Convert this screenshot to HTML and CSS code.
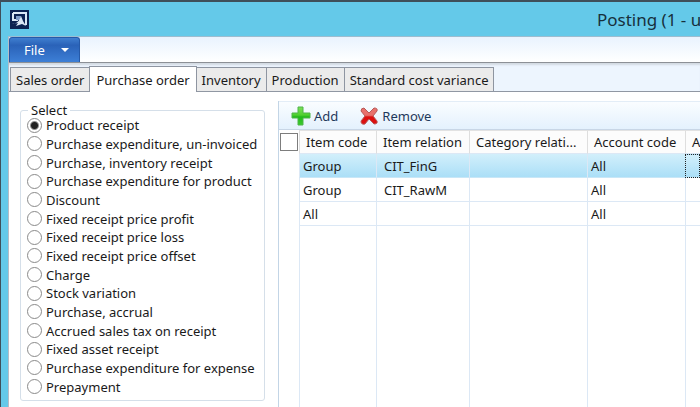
FILE: index.html
```html
<!DOCTYPE html>
<html lang="en">
<head>
  <meta charset="UTF-8">
  <title>Posting</title>
  <link rel="stylesheet" href="styles.css">
</head>
<body>
  <header class="titlebar">
    <svg class="app-icon" viewBox="0 0 19 19">
      <rect width="19" height="19" fill="#0c2252"/>
      <path d="M3 3h13v12M3 3v7h5" fill="none" stroke="#dce8f6" stroke-width="2"/>
      <path d="M6 6h5l-1 4H6z" fill="#7f9cc8"/>
      <path d="M2 14c4 0 7-2 9-8l2 5 3 5-4-2-6 2 2-3z" fill="#dce8f6"/>
    </svg>
    <h1 class="title">Posting (1 - u</h1>
  </header>

  <div class="window">
    <div class="menubar">
      <button class="file-button" type="button">File <span class="arrow"></span></button>
    </div>

    <nav class="tabs" role="tablist">
      <button class="tab" type="button" role="tab">Sales order</button>
      <button class="tab active" type="button" role="tab" aria-selected="true">Purchase order</button>
      <button class="tab" type="button" role="tab">Inventory</button>
      <button class="tab" type="button" role="tab">Production</button>
      <button class="tab" type="button" role="tab">Standard cost variance</button>
    </nav>

    <main class="content">
      <fieldset class="select-group">
        <legend>Select</legend>
        <div class="options">
          <label><input type="radio" name="posting" checked>Product receipt</label>
          <label><input type="radio" name="posting">Purchase expenditure, un-invoiced</label>
          <label><input type="radio" name="posting">Purchase, inventory receipt</label>
          <label><input type="radio" name="posting">Purchase expenditure for product</label>
          <label><input type="radio" name="posting">Discount</label>
          <label><input type="radio" name="posting">Fixed receipt price profit</label>
          <label><input type="radio" name="posting">Fixed receipt price loss</label>
          <label><input type="radio" name="posting">Fixed receipt price offset</label>
          <label><input type="radio" name="posting">Charge</label>
          <label><input type="radio" name="posting">Stock variation</label>
          <label><input type="radio" name="posting">Purchase, accrual</label>
          <label><input type="radio" name="posting">Accrued sales tax on receipt</label>
          <label><input type="radio" name="posting">Fixed asset receipt</label>
          <label><input type="radio" name="posting">Purchase expenditure for expense</label>
          <label><input type="radio" name="posting">Prepayment</label>
        </div>
      </fieldset>

      <section class="grid-panel">
        <div class="toolbar">
          <button class="tool" type="button">
            <svg class="tool-icon" viewBox="0 0 20 20">
              <defs>
                <linearGradient id="green" x2="0" y2="1">
                  <stop offset="0" stop-color="#7fe05a"/>
                  <stop offset="0.45" stop-color="#4fd02f"/>
                  <stop offset="0.55" stop-color="#22b91c"/>
                  <stop offset="1" stop-color="#3ccb2c"/>
                </linearGradient>
              </defs>
              <path d="M7 1h5v6h7v5h-7v7H7v-7H1V7h6z" fill="url(#green)" stroke="#4fb548"/>
            </svg>
            Add
          </button>
          <button class="tool" type="button">
            <svg class="tool-icon" viewBox="0 0 20 20">
              <defs>
                <linearGradient id="red" x2="0" y2="1">
                  <stop offset="0.45" stop-color="#e8716c"/>
                  <stop offset="0.55" stop-color="#dc1010"/>
                </linearGradient>
              </defs>
              <path d="M5 2l5 5 5-5q4 0 3 3l-4 5 4 5q1 3-3 3l-5-5-4 5q-4 1-4-3l4-5-4-5q0-3 3-3z" fill="url(#red)" stroke="#b85a58"/>
            </svg>
            Remove
          </button>
        </div>

        <table class="lines">
          <colgroup>
            <col class="col-check">
            <col class="col-item">
            <col class="col-relation">
            <col class="col-category">
            <col class="col-account">
            <col>
          </colgroup>
          <thead>
            <tr>
              <th class="check"><input type="checkbox" aria-label="Select all"></th>
              <th>Item code</th>
              <th>Item relation</th>
              <th>Category relati...</th>
              <th>Account code</th>
              <th>A</th>
            </tr>
          </thead>
          <tbody>
            <tr class="selected">
              <td class="check"></td>
              <td>Group</td>
              <td>CIT_FinG</td>
              <td></td>
              <td>All</td>
              <td class="focused"></td>
            </tr>
            <tr>
              <td class="check"></td>
              <td>Group</td>
              <td>CIT_RawM</td>
              <td></td>
              <td>All</td>
              <td></td>
            </tr>
            <tr>
              <td class="check"></td>
              <td>All</td>
              <td></td>
              <td></td>
              <td>All</td>
              <td></td>
            </tr>
            <tr class="filler">
              <td class="check"></td>
              <td></td>
              <td></td>
              <td></td>
              <td></td>
              <td></td>
            </tr>
          </tbody>
        </table>
      </section>
    </main>
  </div>
</body>
</html>
```
FILE: styles.css
```css
* {
  box-sizing: border-box;
}

body {
  margin: 0;
  height: 100vh;
  display: flex;
  flex-direction: column;
  overflow: hidden;
  background: #64c9e9;
  border-top: 2px solid #3f4f5a;
  border-left: 1px solid #3f4f5a;
  font-family: "Noto Sans", "Open Sans", sans-serif;
  font-size: 13px;
  color: #1a1a1a;
}

button {
  font: inherit;
  border: none;
  margin: 0;
}

/* title bar */
.titlebar {
  display: flex;
  align-items: center;
  justify-content: space-between;
  height: 34px;
  padding-left: 9px;
}

.app-icon {
  width: 19px;
  height: 19px;
}

.title {
  margin: 0;
  width: 103px;
  overflow: hidden;
  white-space: nowrap;
  font-size: 17px;
  font-weight: normal;
  color: #17303c;
}

.window {
  flex: 1;
  min-height: 0;
  display: flex;
  flex-direction: column;
  margin-left: 7px;
  background: #edf5fe;
  border-top: 1px solid #9cbdd0;
  border-left: 1px solid #b5bcc6;
}

/* menu */
.menubar {
  display: flex;
  height: 26px;
  background: linear-gradient(#e9f3fe, #ffffff);
  border-bottom: 1px solid #8c9096;
}

.file-button {
  display: flex;
  align-items: center;
  gap: 16px;
  padding: 0 10px 0 14px;
  color: #fff;
  background: linear-gradient(#3f7fd0, #2a62b8 30%, #3d7fd6);
  border: 1px solid #2559a8;
  border-bottom: none;
  border-radius: 3px 3px 0 0;
}

.arrow {
  border: 4px solid transparent;
  border-top-color: #fff;
  border-bottom: none;
}

/* tabs */
.tabs {
  display: flex;
  align-items: flex-end;
  height: 29px;
  padding-left: 1px;
  border-bottom: 1px solid #9097a3;
  box-shadow: inset 0 3px 2px -1px #d3dae2;
}

.tab {
  height: 24px;
  padding: 0 5px;
  white-space: nowrap;
  background: #ebebeb;
  border: 1px solid #8e95a1;
  border-bottom: none;
  border-left: none;
  color: #1a1a1a;
}

.tab:first-child {
  border-left: 1px solid #8e95a1;
  border-right: none;
}

.tab.active {
  height: 26px;
  margin-bottom: -1px;
  padding: 0 6px;
  background: #fff;
  border-left: 1px solid #8e95a1;
}

/* content */
.content {
  flex: 1;
  min-height: 0;
  display: flex;
  gap: 13px;
  padding: 9px 0 0 11px;
  background: #fff;
}

.select-group {
  flex: none;
  display: flex;
  width: 245px;
  margin: 0 0 6px;
  padding: 0 5px 4px 6px;
  border: 1px solid #d5dfe9;
  border-radius: 3px;
}

.select-group legend {
  margin-left: 1px;
  padding: 0 3px;
  line-height: 18px;
}

.options {
  flex: 1;
  display: grid;
  grid-auto-rows: 1fr;
  margin-top: -3px;
}

.options label {
  display: flex;
  align-items: center;
  gap: 4px;
  min-height: 0;
  line-height: 18px;
  white-space: nowrap;
}

.options input {
  appearance: none;
  flex: none;
  width: 15px;
  height: 15px;
  margin: 0;
  border: 1px solid #8a8a8a;
  border-radius: 50%;
  background: #fff;
}

.options input:checked {
  background: radial-gradient(#222 0 3px, #fff 5px);
}

/* grid */
.grid-panel {
  flex: 1;
  min-width: 0;
  display: flex;
  flex-direction: column;
  border-left: 1px solid #c3d5e6;
}

.toolbar {
  display: flex;
  gap: 21px;
  height: 29px;
  padding-left: 12px;
  background: linear-gradient(#fafdff, #e4f1fd);
  border-top: 1px solid #e3edf7;
  border-bottom: 1px solid #c8d6e6;
}

.tool {
  display: flex;
  align-items: center;
  gap: 3px;
  padding: 0;
  background: none;
  color: #1e395b;
}

.tool-icon {
  width: 20px;
  height: 20px;
}

.lines {
  flex: 1;
  width: 100%;
  table-layout: fixed;
  border-collapse: separate;
  border-spacing: 0;
}

.col-check { width: 20px; }
.col-item { width: 77px; }
.col-relation { width: 93px; }
.col-category { width: 118px; }
.col-account { width: 98px; }

.lines th,
.lines td {
  height: 24px;
  padding: 0 3px;
  line-height: 20px;
  text-align: left;
  white-space: nowrap;
  overflow: hidden;
  border-left: 1px solid #dce8f5;
  border-bottom: 1px solid #dce8f5;
}

.lines td:nth-child(3) {
  padding-left: 7px;
}

.lines th {
  padding: 0 6px;
  font-weight: normal;
  background: #fcfcfc;
  border-left-color: #dedede;
  border-top: 1px solid #e2e2e2;
}

.lines .check {
  padding: 0 1px;
  background: #fff;
  border: none;
}

.check input {
  appearance: none;
  display: block;
  width: 18px;
  height: 18px;
  margin: 0;
  border: 1px solid #7d7d7d;
  background: #fff;
}

.selected td {
  background: linear-gradient(#d2effb, #abdff7);
  border-bottom-color: #c9e7f7;
}

.lines .focused {
  border: 1px dotted #222;
}

.lines .filler td {
  height: auto;
  border-bottom: none;
}
```
